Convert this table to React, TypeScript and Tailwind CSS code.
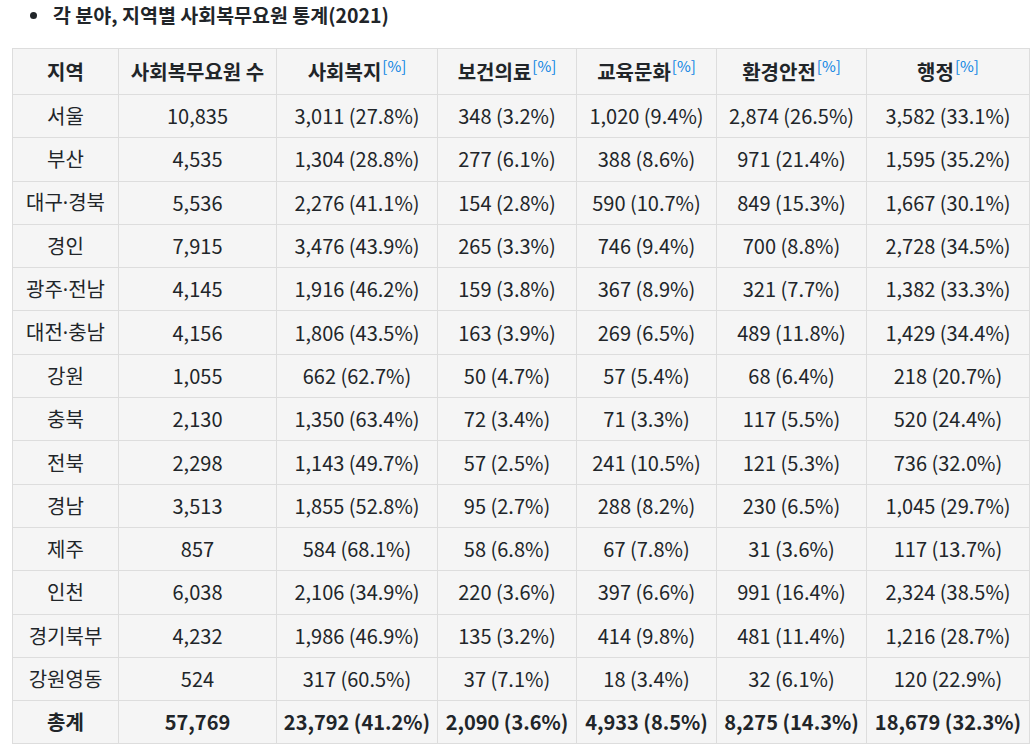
const headers = ["지역", "사회복무요원 수", "사회복지", "보건의료", "교육문화", "환경안전", "행정"];
const colWidths = ["w-[106px]", "w-[158px]", "w-[161px]", "w-[139px]", "w-[140px]", "w-[150px]", "w-[163px]"];

const rows: string[][] = [
  ["서울", "10,835", "3,011 (27.8%)", "348 (3.2%)", "1,020 (9.4%)", "2,874 (26.5%)", "3,582 (33.1%)"],
  ["부산", "4,535", "1,304 (28.8%)", "277 (6.1%)", "388 (8.6%)", "971 (21.4%)", "1,595 (35.2%)"],
  ["대구·경북", "5,536", "2,276 (41.1%)", "154 (2.8%)", "590 (10.7%)", "849 (15.3%)", "1,667 (30.1%)"],
  ["경인", "7,915", "3,476 (43.9%)", "265 (3.3%)", "746 (9.4%)", "700 (8.8%)", "2,728 (34.5%)"],
  ["광주·전남", "4,145", "1,916 (46.2%)", "159 (3.8%)", "367 (8.9%)", "321 (7.7%)", "1,382 (33.3%)"],
  ["대전·충남", "4,156", "1,806 (43.5%)", "163 (3.9%)", "269 (6.5%)", "489 (11.8%)", "1,429 (34.4%)"],
  ["강원", "1,055", "662 (62.7%)", "50 (4.7%)", "57 (5.4%)", "68 (6.4%)", "218 (20.7%)"],
  ["충북", "2,130", "1,350 (63.4%)", "72 (3.4%)", "71 (3.3%)", "117 (5.5%)", "520 (24.4%)"],
  ["전북", "2,298", "1,143 (49.7%)", "57 (2.5%)", "241 (10.5%)", "121 (5.3%)", "736 (32.0%)"],
  ["경남", "3,513", "1,855 (52.8%)", "95 (2.7%)", "288 (8.2%)", "230 (6.5%)", "1,045 (29.7%)"],
  ["제주", "857", "584 (68.1%)", "58 (6.8%)", "67 (7.8%)", "31 (3.6%)", "117 (13.7%)"],
  ["인천", "6,038", "2,106 (34.9%)", "220 (3.6%)", "397 (6.6%)", "991 (16.4%)", "2,324 (38.5%)"],
  ["경기북부", "4,232", "1,986 (46.9%)", "135 (3.2%)", "414 (9.8%)", "481 (11.4%)", "1,216 (28.7%)"],
  ["강원영동", "524", "317 (60.5%)", "37 (7.1%)", "18 (3.4%)", "32 (6.1%)", "120 (22.9%)"],
];

const total = ["총계", "57,769", "23,792 (41.2%)", "2,090 (3.6%)", "4,933 (8.5%)", "8,275 (14.3%)", "18,679 (32.3%)"];

// the CJK font draws "·" full width; the reference has a narrow dot
function Region({ name }: { name: string }) {
  const parts = name.split("·");
  if (parts.length === 1) return <>{name}</>;
  return (
    <>
      {parts[0]}
      <span className="font-['Noto_Sans',sans-serif]">·</span>
      {parts[1]}
    </>
  );
}

export default function App() {
  return (
    <div className="min-h-[753px] bg-white text-[#212529] font-['Noto_Sans_CJK_KR','Noto_Sans',sans-serif]">
      <div className="flex items-center pt-[1px]">
        <span className="ml-[30px] mr-[16px] h-[7px] w-[7px] rounded-full bg-[#212529]" />
        <h3 className="text-[19.5px] font-bold leading-[28px]">
          각 분야, 지역별 사회복무요원 통계(2021)
        </h3>
      </div>

      <table className="ml-[12px] mt-[19px] table-fixed border-collapse border border-[#dddddd] text-[20px] leading-[26px]">
        <colgroup>
          {colWidths.map((w, i) => (
            <col key={i} className={w} />
          ))}
        </colgroup>
        <thead>
          <tr className="h-[46px]">
            {headers.map((h, i) => (
              <th key={h} className="border border-[#dddddd] bg-[#f5f5f5] px-1 text-center font-bold whitespace-nowrap">
                {h}
                {i >= 2 && (
                  <sup className="ml-[1px] text-[15px] font-normal text-[#0b84e3]">[%]</sup>
                )}
              </th>
            ))}
          </tr>
        </thead>
        <tbody>
          {rows.map((r) => (
            <tr key={r[0]} className="h-[43.3px]">
              {r.map((c, i) => (
                <td key={i} className="border border-[#dddddd] bg-[#f5f5f5] px-1 text-center whitespace-nowrap">
                  {i === 0 ? <Region name={c} /> : c}
                </td>
              ))}
            </tr>
          ))}
          <tr className="h-[43.3px]">
            {total.map((c, i) => (
              <td key={i} className="border border-[#dddddd] bg-[#f5f5f5] px-1 text-center font-bold whitespace-nowrap">
                {c}
              </td>
            ))}
          </tr>
        </tbody>
      </table>
    </div>
  );
}
